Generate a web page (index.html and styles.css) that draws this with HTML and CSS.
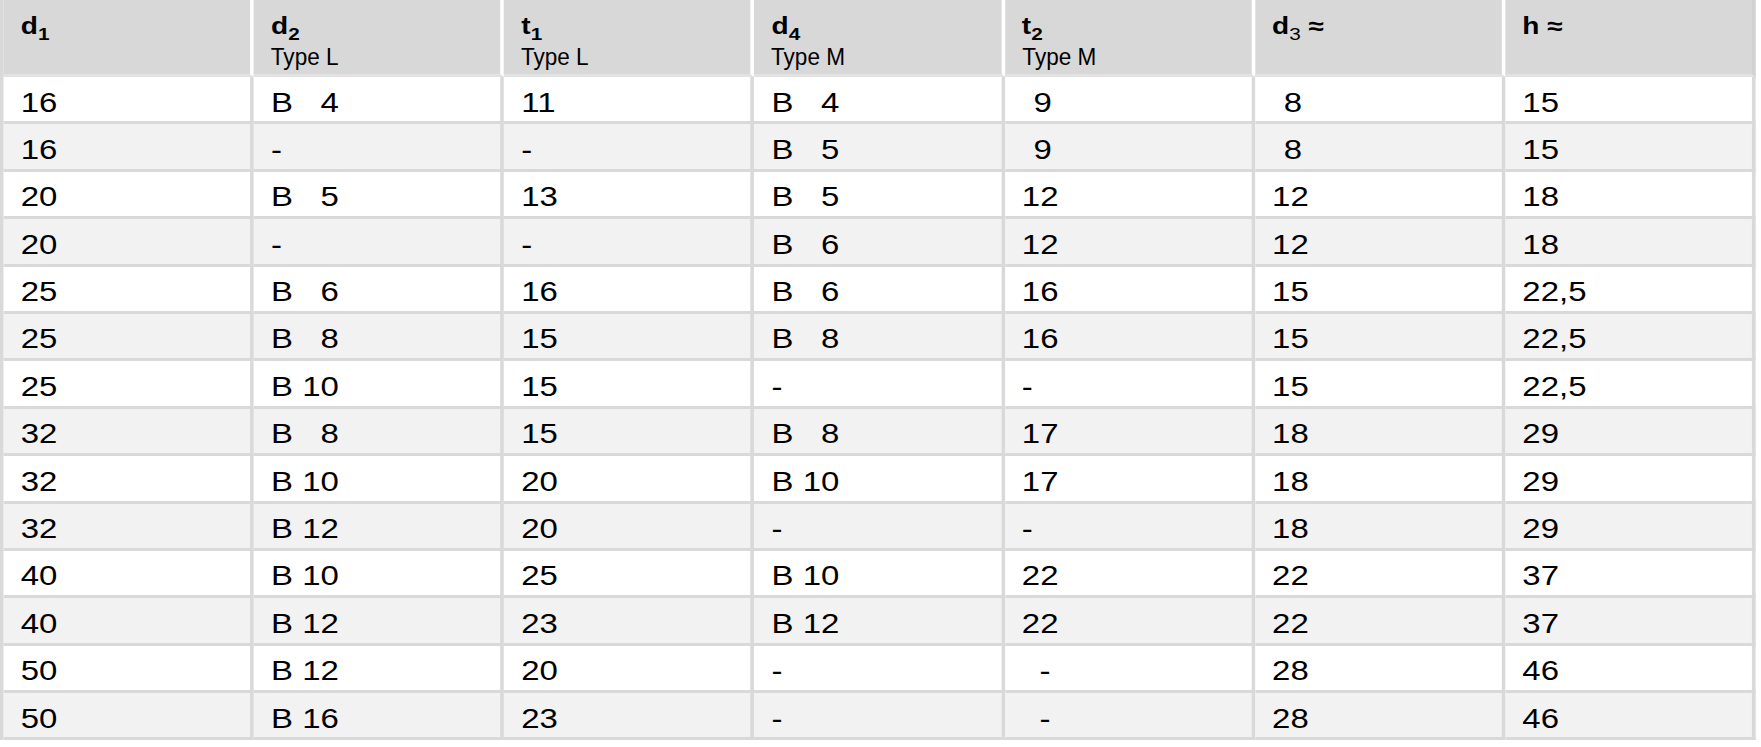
FILE: index.html
```html
<!DOCTYPE html>
<html>
<head>
<meta charset="utf-8">
<link rel="stylesheet" href="styles.css">
</head>
<body>
<table class="dims">
  <thead>
    <tr>
      <th><span class="sym">d<sub>1</sub></span></th>
      <th><span class="sym">d<sub>2</sub></span><span class="type">Type L</span></th>
      <th><span class="sym">t<sub>1</sub></span><span class="type">Type L</span></th>
      <th><span class="sym">d<sub>4</sub></span><span class="type">Type M</span></th>
      <th><span class="sym">t<sub>2</sub></span><span class="type">Type M</span></th>
      <th><span class="sym">d<sub class="reg">3</sub> ≈</span></th>
      <th><span class="sym">h ≈</span></th>
    </tr>
  </thead>
  <tbody>
    <tr><td>16</td><td>B&#8199; 4</td><td>11</td><td>B&#8199; 4</td><td><span class="ind">9</span></td><td><span class="ind">8</span></td><td>15</td></tr>
    <tr><td>16</td><td>-</td><td>-</td><td>B&#8199; 5</td><td><span class="ind">9</span></td><td><span class="ind">8</span></td><td>15</td></tr>
    <tr><td>20</td><td>B&#8199; 5</td><td>13</td><td>B&#8199; 5</td><td>12</td><td>12</td><td>18</td></tr>
    <tr><td>20</td><td>-</td><td>-</td><td>B&#8199; 6</td><td>12</td><td>12</td><td>18</td></tr>
    <tr><td>25</td><td>B&#8199; 6</td><td>16</td><td>B&#8199; 6</td><td>16</td><td>15</td><td>22,5</td></tr>
    <tr><td>25</td><td>B&#8199; 8</td><td>15</td><td>B&#8199; 8</td><td>16</td><td>15</td><td>22,5</td></tr>
    <tr><td>25</td><td>B 10</td><td>15</td><td>-</td><td>-</td><td>15</td><td>22,5</td></tr>
    <tr><td>32</td><td>B&#8199; 8</td><td>15</td><td>B&#8199; 8</td><td>17</td><td>18</td><td>29</td></tr>
    <tr><td>32</td><td>B 10</td><td>20</td><td>B 10</td><td>17</td><td>18</td><td>29</td></tr>
    <tr><td>32</td><td>B 12</td><td>20</td><td>-</td><td>-</td><td>18</td><td>29</td></tr>
    <tr><td>40</td><td>B 10</td><td>25</td><td>B 10</td><td>22</td><td>22</td><td>37</td></tr>
    <tr><td>40</td><td>B 12</td><td>23</td><td>B 12</td><td>22</td><td>22</td><td>37</td></tr>
    <tr><td>50</td><td>B 12</td><td>20</td><td>-</td><td><span class="ind-dash">-</span></td><td>28</td><td>46</td></tr>
    <tr><td>50</td><td>B 16</td><td>23</td><td>-</td><td><span class="ind-dash">-</span></td><td>28</td><td>46</td></tr>
  </tbody>
</table>
</body>
</html>
```

FILE: styles.css
```css
html, body {
  margin: 0;
  padding: 0;
  background: #ffffff;
}

.dims {
  width: 1439px;
  table-layout: fixed;
  border-collapse: separate;
  border-spacing: 0;
  font-family: "Liberation Sans", Arial, sans-serif;
  color: #000;
  border-left: 3.3px solid #d9d9d9;
  transform: scaleX(1.22);
  transform-origin: 0 0;
}

.dims th {
  background: #d8d8d8;
  height: 77px;
  padding: 13px 0 0 14px;
  text-align: left;
  vertical-align: top;
  font-weight: normal;
  border-right: 3.3px solid #ffffff;
  border-bottom: 3px solid #e2e2e2;
  box-sizing: border-box;
}

.dims th:last-child {
  border-right-color: #d2d2d2;
}

.sym {
  display: block;
  font-weight: bold;
  font-size: 23px;
  line-height: 26px;
  white-space: nowrap;
}

.sym sub {
  font-size: 17px;
  vertical-align: -6px;
  line-height: 0;
}

.sym sub.reg {
  font-weight: normal;
}

.type {
  display: block;
  margin-top: 5px;
  font-size: 24px;
  line-height: 26px;
  transform: scaleX(0.77);
  transform-origin: left center;
  white-space: nowrap;
}

.dims td {
  height: 47.4px;
  box-sizing: border-box;
  padding: 10.5px 0 0 14px;
  font-size: 27px;
  line-height: 30px;
  white-space: pre;
  vertical-align: top;
  border-right: 3.3px solid #d9d9d9;
  border-bottom: 3px solid #d9d9d9;
  background: #ffffff;
}

.dims tbody tr:nth-child(even) td {
  background: #f2f2f2;
}

.ind {
  padding-left: 9.5px;
}

.ind-dash {
  padding-left: 14.5px;
}
```
